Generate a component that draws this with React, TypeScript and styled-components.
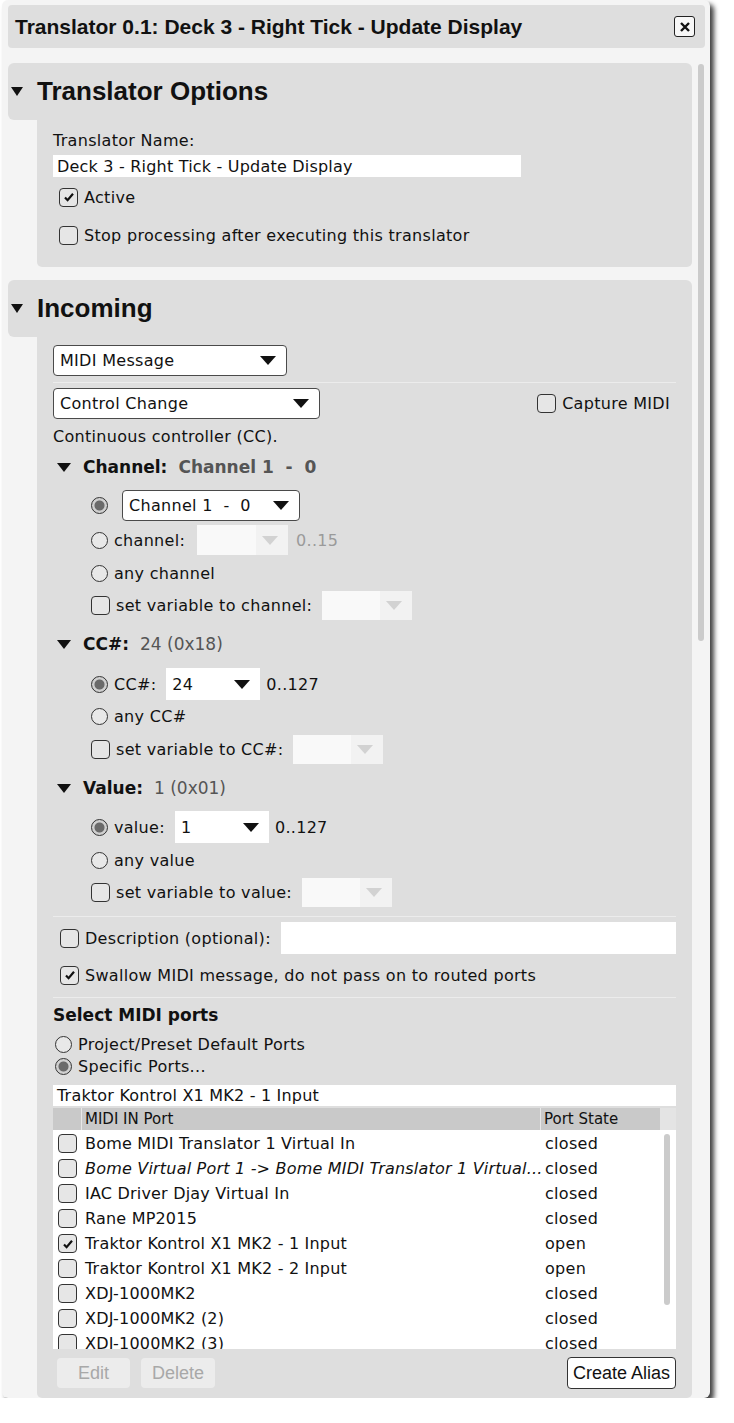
import styled, { createGlobalStyle } from "styled-components";

const GlobalStyle = createGlobalStyle`
  html, body {
    margin: 0;
    padding: 0;
    background: #ffffff;
  }
  body {
    font-family: "DejaVu Sans", "Noto Sans", sans-serif;
    font-size: 16px;
    color: #111;
  }
`;

const Window = styled.div`
  width: 708px;
  margin: 0 0 0 2px;
  height: 1398px;
  background: #f4f4f4;
  border-radius: 6px;
  box-shadow: 4px 4px 5px rgba(0, 0, 0, 0.75);
  display: flex;
  flex-direction: column;
  overflow: hidden;
`;

const TitleBar = styled.div`
  margin: 5px 5px 0 6px;
  height: 43px;
  background: #dedede;
  border-radius: 4px;
  display: flex;
  align-items: center;
  padding: 0 10px 0 7px;
`;

const Title = styled.div`
  font-family: "Liberation Sans", Arial, sans-serif;
  font-weight: bold;
  font-size: 21px;
  flex: 1;
`;

const CloseButton = styled.div`
  width: 19px;
  height: 19px;
  border: 1.5px solid #222;
  border-radius: 3px;
  background: #f7f7f7;
  display: flex;
  align-items: center;
  justify-content: center;
`;

const Body = styled.div`
  display: flex;
  margin-top: 15px;
  margin-left: 6px;
  flex: 1;
  min-height: 0;
`;

const Content = styled.div`
  width: 684px;
  display: flex;
  flex-direction: column;
  gap: 13px;
`;

const ScrollTrack = styled.div`
  width: 18px;
  padding: 1px 0 0 6px;
  box-sizing: border-box;
`;

const ScrollThumb = styled.div<{ $h: number }>`
  width: 6px;
  height: ${(p) => p.$h}px;
  border-radius: 3px;
  background: #cbcbcb;
`;

const Section = styled.div<{ $grow?: boolean }>`
  display: flex;
  flex-direction: column;
  flex: ${(p) => (p.$grow ? 1 : "none")};
`;

const SectionHeader = styled.div`
  height: 57px;
  background: #dedede;
  border-radius: 6px 6px 0 6px;
  display: flex;
  align-items: center;
  padding-left: 3px;
`;

const SectionTitle = styled.div`
  font-family: "Liberation Sans", Arial, sans-serif;
  font-weight: bold;
  font-size: 26px;
  margin-left: 14px;
`;

const Triangle = styled.span<{ $w: number; $h: number }>`
  display: inline-block;
  width: 0;
  height: 0;
  border-left: ${(p) => p.$w / 2}px solid transparent;
  border-right: ${(p) => p.$w / 2}px solid transparent;
  border-top: ${(p) => p.$h}px solid #111;
  flex: none;
`;

const SectionBody = styled.div<{ $grow?: boolean }>`
  margin-left: 29px;
  background: #dedede;
  border-radius: 0 0 5px 5px;
  padding: 0 16px;
  display: flex;
  flex-direction: column;
  flex: ${(p) => (p.$grow ? 1 : "none")};
`;

const Row = styled.div<{ $h: number; $mt?: number; $indent?: number }>`
  display: flex;
  align-items: center;
  height: ${(p) => p.$h}px;
  margin-top: ${(p) => p.$mt ?? 0}px;
  padding-left: ${(p) => p.$indent ?? 0}px;
  white-space: nowrap;
  flex: none;
`;

const Label = styled.span<{ $muted?: boolean; $gap?: number }>`
  color: ${(p) => (p.$muted ? "#9a9a9a" : "#111")};
  margin-left: ${(p) => p.$gap ?? 0}px;
  letter-spacing: 0.3px;
`;

const SubHead = styled.span`
  font-weight: bold;
  font-size: 17px;
  margin-left: 12px;
`;

const SubValue = styled.span<{ $bold?: boolean }>`
  color: #555;
  font-size: 17px;
  font-weight: ${(p) => (p.$bold ? "bold" : "normal")};
  margin-left: 11px;
  white-space: pre;
`;

const Separator = styled.div<{ $mt: number }>`
  height: 1px;
  background: #ececec;
  margin-top: ${(p) => p.$mt}px;
  flex: none;
`;

const TextField = styled.div<{ $w?: number; $h: number }>`
  background: #ffffff;
  height: ${(p) => p.$h}px;
  width: ${(p) => (p.$w ? `${p.$w}px` : "auto")};
  flex: ${(p) => (p.$w ? "none" : 1)};
  display: flex;
  align-items: center;
  padding-left: 4px;
  box-sizing: border-box;
  letter-spacing: 0.2px;
`;

const Box = styled.span<{ $gap?: number }>`
  width: 17px;
  height: 17px;
  border: 1.5px solid #333;
  border-radius: 4px;
  display: inline-flex;
  align-items: center;
  justify-content: center;
  flex: none;
  margin-right: ${(p) => p.$gap ?? 6}px;
  background: #e6e6e6;
`;

const Radio = styled.span<{ $on?: boolean }>`
  width: 15px;
  height: 15px;
  border: 1.5px solid #333;
  border-radius: 50%;
  flex: none;
  margin-right: 6px;
  background: ${(p) =>
    p.$on
      ? "radial-gradient(circle, #6a6a6a 0 4.5px, #cfcfcf 5.5px)"
      : "#e8e8e8"};
`;

const Combo = styled.div<{ $w: number; $h: number; $kind: "framed" | "flat" | "disabled"; $ml?: number }>`
  width: ${(p) => p.$w}px;
  height: ${(p) => p.$h}px;
  box-sizing: border-box;
  margin-left: ${(p) => p.$ml ?? 0}px;
  background: ${(p) => (p.$kind === "disabled" ? "#f9f9f9" : "#ffffff")};
  border: ${(p) => (p.$kind === "framed" ? "1px solid #4a4a4a" : "none")};
  border-radius: ${(p) => (p.$kind === "framed" ? "4px" : "0")};
  display: flex;
  align-items: center;
  padding: 0 10px 0 6px;
  flex: none;
`;

const ComboText = styled.span`
  flex: 1;
  letter-spacing: 0.3px;
  white-space: pre;
`;

const ComboArrow = styled.span<{ $dim?: boolean }>`
  width: 0;
  height: 0;
  border-left: 8px solid transparent;
  border-right: 8px solid transparent;
  border-top: 9px solid ${(p) => (p.$dim ? "#d2d2d2" : "#111")};
`;

const DimArrowCell = styled.span`
  align-self: stretch;
  display: flex;
  align-items: center;
  padding-left: 6px;
  background: #f2f2f2;
  margin-right: -10px;
  padding-right: 10px;
`;

const RightGroup = styled.div`
  margin-left: auto;
  margin-right: 6px;
  display: flex;
  align-items: center;
`;

const BoldLabel = styled.span`
  font-weight: bold;
  font-size: 17px;
`;

const Table = styled.div`
  display: flex;
  flex-direction: column;
  flex: none;
`;

const TableHeader = styled.div`
  display: flex;
  height: 22px;
  margin-top: 2px;
  background: #e4e4e4;
  font-size: 15px;
`;

const HeadCell = styled.div<{ $w: number; $last?: boolean }>`
  width: ${(p) => p.$w}px;
  background: #c9c9c9;
  border-right: ${(p) => (p.$last ? "none" : "1px solid #e8e8e8")};
  box-sizing: border-box;
  padding-left: 3px;
  display: flex;
  align-items: center;
`;

const TableBody = styled.div`
  display: flex;
  height: 218px;
  padding-top: 1px;
  background: #ffffff;
  overflow: hidden;
`;

const RowsCol = styled.div`
  flex: 1;
  display: flex;
  flex-direction: column;
`;

const PortRow = styled.div`
  display: flex;
  align-items: center;
  height: 25px;
  flex: none;
  white-space: nowrap;
`;

const CheckCell = styled.div`
  width: 29px;
  padding-left: 5px;
  box-sizing: border-box;
  display: flex;
  align-items: center;
`;

const NameCell = styled.div<{ $italic?: boolean }>`
  width: 459px;
  padding-left: 3px;
  box-sizing: border-box;
  overflow: hidden;
  font-style: ${(p) => (p.$italic ? "italic" : "normal")};
  letter-spacing: 0.2px;
`;

const StateCell = styled.div`
  padding-left: 4px;
  letter-spacing: 0.3px;
`;

const TableScroll = styled.div`
  width: 16px;
  padding: 3px 0 0 4px;
  box-sizing: border-box;
`;

const ButtonRow = styled.div`
  display: flex;
  align-items: center;
  height: 32px;
  margin-top: 8px;
  padding-left: 4px;
  gap: 11px;
`;

const Button = styled.div<{ $disabled?: boolean; $w: number }>`
  width: ${(p) => p.$w}px;
  height: ${(p) => (p.$disabled ? 30 : 32)}px;
  box-sizing: border-box;
  display: flex;
  align-items: center;
  justify-content: center;
  border-radius: 4px;
  background: ${(p) => (p.$disabled ? "#ececec" : "#ffffff")};
  border: ${(p) => (p.$disabled ? "none" : "1px solid #333")};
  color: ${(p) => (p.$disabled ? "#a8a8a8" : "#111")};
  font-family: "Liberation Sans", Arial, sans-serif;
  font-size: 18px;
  margin-left: ${(p) => (p.$disabled ? 0 : "auto")};
`;

function Check({ on, gap }: { on?: boolean; gap?: number }) {
  return (
    <Box $gap={gap}>
      {on && (
        <svg width="12" height="12" viewBox="0 0 12 12">
          <path d="M2 6.5 L4.6 9.2 L10 2.8" fill="none" stroke="#111" strokeWidth="2.2" />
        </svg>
      )}
    </Box>
  );
}

const ports = [
  { name: "Bome MIDI Translator 1 Virtual In", state: "closed" },
  { name: "Bome Virtual Port 1 -> Bome MIDI Translator 1 Virtual...", state: "closed", italic: true },
  { name: "IAC Driver Djay Virtual In", state: "closed" },
  { name: "Rane MP2015", state: "closed" },
  { name: "Traktor Kontrol X1 MK2 - 1 Input", state: "open", on: true },
  { name: "Traktor Kontrol X1 MK2 - 2 Input", state: "open" },
  { name: "XDJ-1000MK2", state: "closed" },
  { name: "XDJ-1000MK2 (2)", state: "closed" },
  { name: "XDJ-1000MK2 (3)", state: "closed" }
];

export default function App() {
  return (
    <>
      <GlobalStyle />
      <Window>
        <TitleBar>
          <Title>Translator 0.1: Deck 3 - Right Tick - Update Display</Title>
          <CloseButton>
            <svg width="12" height="12" viewBox="0 0 12 12">
              <path d="M2 2 L10 10 M10 2 L2 10" stroke="#111" strokeWidth="2.4" />
            </svg>
          </CloseButton>
        </TitleBar>

        <Body>
          <Content>
            <Section>
              <SectionHeader>
                <Triangle $w={12} $h={9} />
                <SectionTitle>Translator Options</SectionTitle>
              </SectionHeader>
              <SectionBody>
                <Row $h={20} $mt={10}>
                  <Label>Translator Name:</Label>
                </Row>
                <Row $h={22} $mt={5}>
                  <TextField $w={468} $h={22}>
                    Deck 3 - Right Tick - Update Display
                  </TextField>
                </Row>
                <Row $h={34} $mt={3} $indent={6}>
                  <Check on />
                  <Label>Active</Label>
                </Row>
                <Row $h={34} $mt={4} $indent={6}>
                  <Check />
                  <Label>Stop processing after executing this translator</Label>
                </Row>
                <Row $h={15} />
              </SectionBody>
            </Section>

            <Section $grow>
              <SectionHeader>
                <Triangle $w={12} $h={9} />
                <SectionTitle>Incoming</SectionTitle>
              </SectionHeader>
              <SectionBody $grow>
                <Row $h={31} $mt={8}>
                  <Combo $w={234} $h={31} $kind="framed">
                    <ComboText>MIDI Message</ComboText>
                    <ComboArrow />
                  </Combo>
                </Row>
                <Separator $mt={6} />
                <Row $h={31} $mt={5}>
                  <Combo $w={267} $h={31} $kind="framed">
                    <ComboText>Control Change</ComboText>
                    <ComboArrow />
                  </Combo>
                  <RightGroup>
                    <Check />
                    <Label>Capture MIDI</Label>
                  </RightGroup>
                </Row>
                <Row $h={34}>
                  <Label>Continuous controller (CC).</Label>
                </Row>

                <Row $h={28} $indent={4}>
                  <Triangle $w={15} $h={9} />
                  <SubHead>Channel:</SubHead>
                  <SubValue $bold>Channel 1  -  0</SubValue>
                </Row>
                <Row $h={36} $mt={6} $indent={38}>
                  <Radio $on />
                  <Combo $w={178} $h={31} $kind="framed" $ml={8}>
                    <ComboText>Channel 1  -  0</ComboText>
                    <ComboArrow />
                  </Combo>
                </Row>
                <Row $h={34} $indent={38}>
                  <Radio />
                  <Label>channel:</Label>
                  <Combo $w={91} $h={30} $kind="disabled" $ml={12}>
                    <ComboText />
                    <DimArrowCell>
                      <ComboArrow $dim />
                    </DimArrowCell>
                  </Combo>
                  <Label $muted $gap={8}>0..15</Label>
                </Row>
                <Row $h={32} $indent={38}>
                  <Radio />
                  <Label>any channel</Label>
                </Row>
                <Row $h={32} $indent={38}>
                  <Check />
                  <Label>set variable to channel:</Label>
                  <Combo $w={90} $h={29} $kind="disabled" $ml={10}>
                    <ComboText />
                    <DimArrowCell>
                      <ComboArrow $dim />
                    </DimArrowCell>
                  </Combo>
                </Row>

                <Row $h={30} $mt={8} $indent={4}>
                  <Triangle $w={15} $h={9} />
                  <SubHead>CC#:</SubHead>
                  <SubValue>24 (0x18)</SubValue>
                </Row>
                <Row $h={34} $mt={8} $indent={38}>
                  <Radio $on />
                  <Label>CC#:</Label>
                  <Combo $w={94} $h={32} $kind="flat" $ml={10}>
                    <ComboText>24</ComboText>
                    <ComboArrow />
                  </Combo>
                  <Label $gap={6}>0..127</Label>
                </Row>
                <Row $h={30} $indent={38}>
                  <Radio />
                  <Label>any CC#</Label>
                </Row>
                <Row $h={36} $indent={38}>
                  <Check />
                  <Label>set variable to CC#:</Label>
                  <Combo $w={90} $h={29} $kind="disabled" $ml={10}>
                    <ComboText />
                    <DimArrowCell>
                      <ComboArrow $dim />
                    </DimArrowCell>
                  </Combo>
                </Row>

                <Row $h={30} $mt={6} $indent={4}>
                  <Triangle $w={15} $h={9} />
                  <SubHead>Value:</SubHead>
                  <SubValue>1 (0x01)</SubValue>
                </Row>
                <Row $h={36} $mt={6} $indent={38}>
                  <Radio $on />
                  <Label>value:</Label>
                  <Combo $w={94} $h={32} $kind="flat" $ml={10}>
                    <ComboText>1</ComboText>
                    <ComboArrow />
                  </Combo>
                  <Label $gap={6}>0..127</Label>
                </Row>
                <Row $h={30} $indent={38}>
                  <Radio />
                  <Label>any value</Label>
                </Row>
                <Row $h={34} $indent={38}>
                  <Check />
                  <Label>set variable to value:</Label>
                  <Combo $w={90} $h={29} $kind="disabled" $ml={10}>
                    <ComboText />
                    <DimArrowCell>
                      <ComboArrow $dim />
                    </DimArrowCell>
                  </Combo>
                </Row>

                <Separator $mt={7} />
                <Row $h={32} $mt={5} $indent={7}>
                  <Check />
                  <Label>Description (optional):</Label>
                  <TextField $h={32} style={{ marginLeft: 10 }} />
                </Row>
                <Row $h={32} $mt={5} $indent={7}>
                  <Check on />
                  <Label>Swallow MIDI message, do not pass on to routed ports</Label>
                </Row>
                <Separator $mt={6} />

                <Row $h={22} $mt={6}>
                  <BoldLabel>Select MIDI ports</BoldLabel>
                </Row>
                <Row $h={22} $mt={7} $indent={2}>
                  <Radio />
                  <Label>Project/Preset Default Ports</Label>
                </Row>
                <Row $h={22} $indent={2}>
                  <Radio $on />
                  <Label>Specific Ports...</Label>
                </Row>
                <Row $h={21} $mt={8}>
                  <TextField $h={21}>Traktor Kontrol X1 MK2 - 1 Input</TextField>
                </Row>

                <Table>
                  <TableHeader>
                    <HeadCell $w={29} />
                    <HeadCell $w={459}>MIDI IN Port</HeadCell>
                    <HeadCell $w={119} $last>
                      Port State
                    </HeadCell>
                  </TableHeader>
                  <TableBody>
                    <RowsCol>
                      {ports.map((p) => (
                        <PortRow key={p.name}>
                          <CheckCell>
                            <Check on={p.on} gap={0} />
                          </CheckCell>
                          <NameCell $italic={p.italic}>{p.name}</NameCell>
                          <StateCell>{p.state}</StateCell>
                        </PortRow>
                      ))}
                    </RowsCol>
                    <TableScroll>
                      <ScrollThumb $h={171} />
                    </TableScroll>
                  </TableBody>
                </Table>

                <ButtonRow>
                  <Button $disabled $w={73}>
                    Edit
                  </Button>
                  <Button $disabled $w={74}>
                    Delete
                  </Button>
                  <Button $w={109}>Create Alias</Button>
                </ButtonRow>
              </SectionBody>
            </Section>
          </Content>
          <ScrollTrack>
            <ScrollThumb $h={577} />
          </ScrollTrack>
        </Body>
      </Window>
    </>
  );
}
